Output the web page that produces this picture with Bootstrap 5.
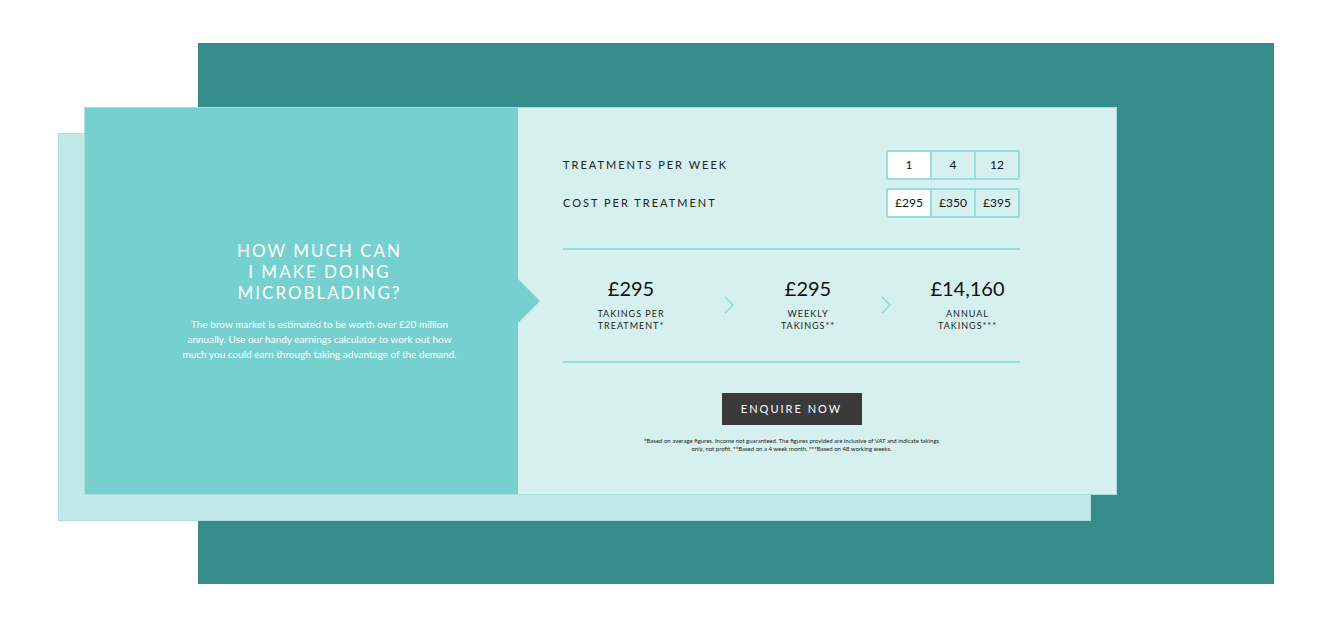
<!DOCTYPE html>
<html lang="en">
<head>
<meta charset="utf-8">
<meta name="viewport" content="width=device-width, initial-scale=1">
<title>Microblading earnings calculator</title>
<link href="https://cdn.jsdelivr.net/npm/bootstrap@5.3.0/dist/css/bootstrap.min.css" rel="stylesheet">
<style>
  :root { --teal: #76d0cf; --mint: #d5f0ee; --line: #98dcdc; --edge: #a9dedd; }
  body { font-family: Lato, "Liberation Sans", sans-serif; color: #222; background: #fff; }
  .stage { padding: 43px 56px 42px 198px; }
  .backdrop { background: #368b8b; padding: 64px 0 89px; }
  .calculator { margin-left: -114px; margin-right: 157px; background: var(--mint);
    border: 1px solid var(--edge); box-shadow: -26px 26px 0 -1px #c1e9e7, -26px 26px 0 0 var(--edge); }
  .intro { width: 42%; background: var(--teal); padding-left: 36px; }
  .intro::after { content: ""; position: absolute; left: 100%; top: 50%; width: 22px; height: 44px;
    transform: translateY(-50%); background: var(--teal); clip-path: polygon(0 0, 100% 50%, 0 100%); }
  .intro h1 { font-size: 17px; line-height: 21px; letter-spacing: 2px; margin-bottom: 14px; }
  .intro p { font-size: 10px; line-height: 15px; }
  .figures { padding: 42px 96px 41px 45px; }
  .option-label { font-size: 11px; letter-spacing: 2px; }
  .options { width: 134px; height: 30px; }
  .options .btn { flex: 1 1 0; padding: 0; font-size: 12px; line-height: 26px; color: #111;
    border: 2px solid var(--line); border-radius: 2px; }
  .options .btn + .btn-check + .btn { margin-left: -2px; }
  .options .btn-check:checked + .btn { background: #fff; color: #111; border-color: var(--line); }
  .results { display: grid; grid-template-columns: 136fr 60fr 98fr 58fr 105fr; margin-top: 30px;
    border: solid var(--line); border-width: 2px 0; padding: 24px 0 29px; }
  .amount { font-size: 20px; line-height: 28px; margin-bottom: 6px; color: #111; }
  .caption-text { font-size: 9px; line-height: 12px; letter-spacing: 1px; }
  .enquire { background: #3a3a3a; color: #fff; border: 0; border-radius: 0; width: 140px; height: 32px;
    padding: 0; font-size: 11px; letter-spacing: 2px; margin-top: 30px; }
  .enquire:hover { background: #222; color: #fff; }
  .footnote { font-size: 6px; line-height: 8px; margin-top: 12px; }
</style>
</head>
<body>
<main class="stage">
  <div class="backdrop">
    <section class="calculator d-flex">
      <div class="intro position-relative d-flex flex-column justify-content-center text-center text-white">
        <h1 class="fw-normal">HOW MUCH CAN<br>I MAKE DOING<br>MICROBLADING?</h1>
        <p class="mb-0">The brow market is estimated to be worth over £20 million<br>annually. Use our handy earnings calculator to work out how<br>much you could earn through taking advantage of the demand.</p>
      </div>
      <form class="figures flex-grow-1">
        <div class="d-flex justify-content-between align-items-center mb-2" role="group" aria-labelledby="perWeek">
          <span class="option-label" id="perWeek">TREATMENTS PER WEEK</span>
          <div class="btn-group options">
            <input type="radio" class="btn-check" name="week" id="w1" checked><label class="btn" for="w1">1</label>
            <input type="radio" class="btn-check" name="week" id="w4"><label class="btn" for="w4">4</label>
            <input type="radio" class="btn-check" name="week" id="w12"><label class="btn" for="w12">12</label>
          </div>
        </div>
        <div class="d-flex justify-content-between align-items-center" role="group" aria-labelledby="cost">
          <span class="option-label" id="cost">COST PER TREATMENT</span>
          <div class="btn-group options">
            <input type="radio" class="btn-check" name="cost" id="c295" checked><label class="btn" for="c295">£295</label>
            <input type="radio" class="btn-check" name="cost" id="c350"><label class="btn" for="c350">£350</label>
            <input type="radio" class="btn-check" name="cost" id="c395"><label class="btn" for="c395">£395</label>
          </div>
        </div>
        <div class="results text-center align-items-center">
          <div><div class="amount">£295</div><div class="caption-text">TAKINGS PER<br>TREATMENT*</div></div>
          <div><svg width="10" height="18" viewBox="0 0 10 18" fill="none" stroke="#8edada" stroke-width="1.5" aria-hidden="true"><path d="M1 1l8 8-8 8"/></svg></div>
          <div><div class="amount">£295</div><div class="caption-text">WEEKLY<br>TAKINGS**</div></div>
          <div><svg width="10" height="18" viewBox="0 0 10 18" fill="none" stroke="#8edada" stroke-width="1.5" aria-hidden="true"><path d="M1 1l8 8-8 8"/></svg></div>
          <div><div class="amount">£14,160</div><div class="caption-text">ANNUAL<br>TAKINGS***</div></div>
        </div>
        <div class="text-center">
          <button type="button" class="btn enquire">ENQUIRE NOW</button>
          <p class="footnote mb-0"><b>*</b>Based on average figures. Income not guaranteed. The figures provided are inclusive of VAT and indicate takings<br>only, not profit. <b>**</b>Based on a 4 week month. <b>***</b>Based on 48 working weeks.</p>
        </div>
      </form>
    </section>
  </div>
</main>
<script src="https://cdn.jsdelivr.net/npm/bootstrap@5.3.0/dist/js/bootstrap.bundle.min.js"></script>
</body>
</html>
